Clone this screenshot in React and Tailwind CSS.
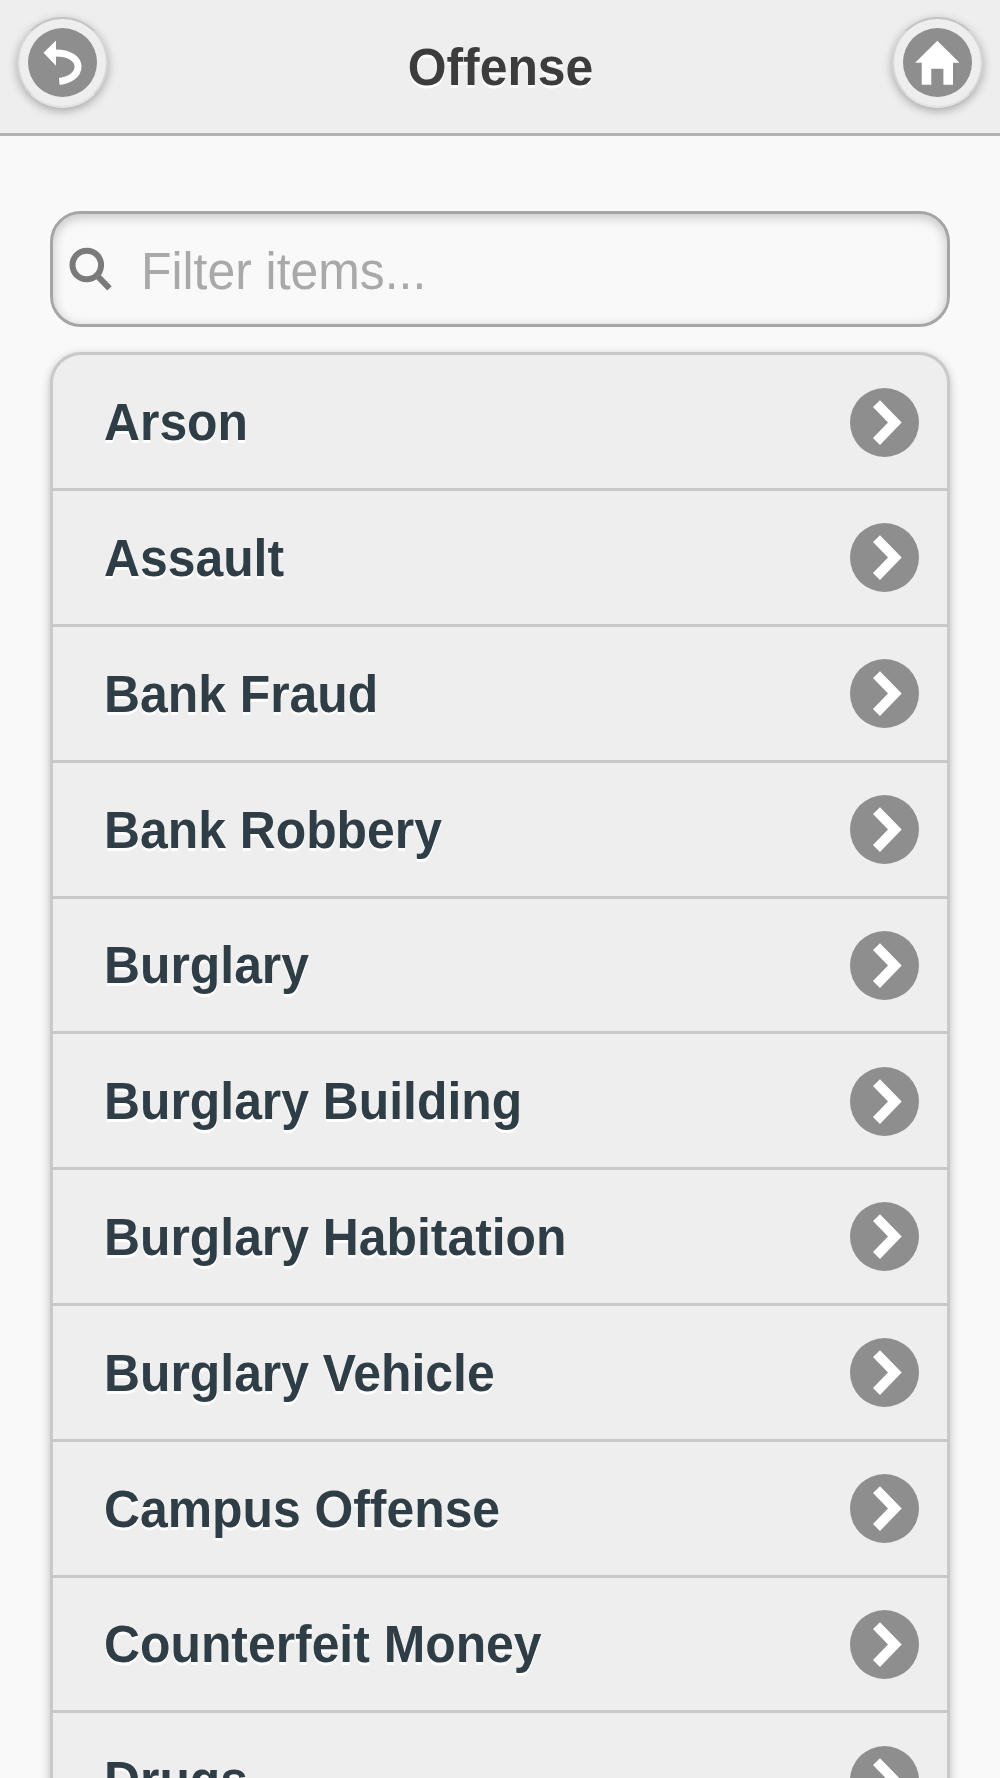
const offenses = [
  "Arson",
  "Assault",
  "Bank Fraud",
  "Bank Robbery",
  "Burglary",
  "Burglary Building",
  "Burglary Habitation",
  "Burglary Vehicle",
  "Campus Offense",
  "Counterfeit Money",
  "Drugs",
];

function RoundButton({ label, children }) {
  return (
    <button
      aria-label={label}
      className="flex size-[91px] shrink-0 items-center justify-center rounded-full border-2 border-t-[#c4c4c4] border-x-[#d6d6d6] border-b-[#e2e2e2] bg-[#eeeeee] shadow-[0_3px_10px_rgba(0,0,0,0.3)]"
    >
      <svg viewBox="0 0 69 69" className="size-[69px]">
        <circle cx="34.5" cy="34.5" r="34.5" fill="#8e8e8e" />
        {children}
      </svg>
    </button>
  );
}

function Chevron() {
  return (
    <svg viewBox="0 0 69 69" className="mt-[0.6px] size-[69px] shrink-0">
      <circle cx="34.5" cy="34.5" r="34.5" fill="#8e8e8e" />
      <path d="M23 19L30 12.2L51.7 34.5L30 57L23 50L38 34.5Z" fill="#fff" />
    </svg>
  );
}

export default function App() {
  return (
    <div className="flex h-[1778px] w-[1000px] flex-col overflow-hidden bg-[#f9f9f9] font-['Liberation_Sans',Arial,sans-serif] text-[49.85px]">
      <header className="flex h-[136px] shrink-0 items-start justify-between border-b-3 border-[#b3b3b3] bg-[#eeeeee] px-[17px] pt-[17px]">
        <RoundButton label="Back">
          <path d="M15.5 24.7L28 12.5V37.7Z" fill="#fff" />
          <path
            d="M27.5 25C41 25 50 30.5 50 38.5C50 46.5 42 52.3 31.3 53.4"
            fill="none"
            stroke="#fff"
            strokeWidth="7"
          />
        </RoundButton>
        <h1 className="mt-[22px] ml-px origin-[50%_46px] scale-y-[1.04] leading-[58px] font-bold text-[#3c3c3c] [text-shadow:0_2.5px_0_#fff]">
          Offense
        </h1>
        <RoundButton label="Home">
          <path
            d="M34.3 12.8L56.5 34.8H50V56.7H40.4V40.7H28.3V56.7H18.7V34.8H12.2Z"
            fill="#fff"
          />
        </RoundButton>
      </header>

      <main className="px-[50px] pt-[75px]">
        <label className="flex h-[116px] items-center rounded-[31px] border-3 border-[#a5a5a5] bg-[#f9f9f9] pl-[14.5px] shadow-[inset_0_3px_12px_rgba(0,0,0,0.22)]">
          <svg viewBox="0 0 46 46" className="size-[46px] shrink-0" fill="none" stroke="#7a7a7a">
            <circle cx="18.8" cy="19" r="14.3" strokeWidth="6" />
            <path d="M28.8 29.3L41.5 42.3" strokeWidth="6" />
          </svg>
          <input
            type="text"
            placeholder="Filter items..."
            className="mt-[6px] ml-[27.5px] h-[58px] min-w-0 flex-1 origin-[0_46px] scale-y-[1.04] bg-transparent leading-[58px] outline-none placeholder:text-[#a9a9a9] placeholder:opacity-100"
          />
        </label>

        <ul className="mt-[25px] overflow-hidden rounded-t-[31px] border-3 border-b-0 border-[#c9c9c9] bg-[#eeeeee] pt-[0.4px] shadow-[0_3px_10px_rgba(0,0,0,0.25)]">
          {offenses.map((name) => (
            <li
              key={name}
              className="flex h-[135.8px] items-center justify-between border-b-3 border-[#c9c9c9] pr-[28px] pl-[51px]"
            >
              <a className="mt-[3px] origin-[0_46px] scale-y-[1.04] leading-[58px] font-bold whitespace-nowrap text-[#2f3e46] [text-shadow:0_2.5px_0_#fff]">
                {name}
              </a>
              <Chevron />
            </li>
          ))}
        </ul>
      </main>
    </div>
  );
}
